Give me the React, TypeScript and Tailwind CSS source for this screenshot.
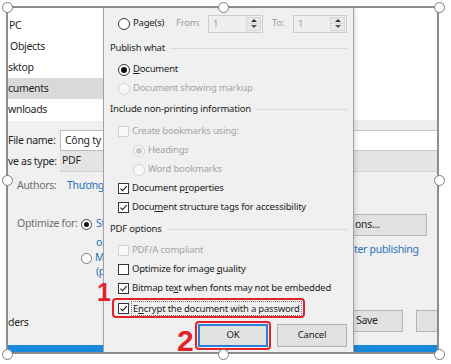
import React from 'react'

type BoxProps = { on?: boolean; disabled?: boolean }

function Radio({ on, disabled }: BoxProps) {
  return (
    <span
      className={`flex h-[12px] w-[12px] shrink-0 items-center justify-center rounded-full border ${
        disabled ? 'border-[#d2d2d2] bg-[#f8f8f8]' : 'border-[#3a3a3a] bg-white'
      }`}
    >
      {on && <span className={`h-[6px] w-[6px] rounded-full ${disabled ? 'bg-[#c8c8c8]' : 'bg-[#111]'}`} />}
    </span>
  )
}

function Check({ on, disabled }: BoxProps) {
  return (
    <span
      className={`flex h-[11px] w-[11px] shrink-0 items-center justify-center border ${
        disabled ? 'border-[#d2d2d2] bg-[#f8f8f8]' : 'border-[#333] bg-white'
      }`}
    >
      {on && (
        <svg width="9" height="9" viewBox="0 0 9 9">
          <path d="M1.4 4.6 L3.6 6.7 L7.7 2.1" fill="none" stroke="#222" strokeWidth="1.1" />
        </svg>
      )}
    </span>
  )
}

function Spin({ className }: { className: string }) {
  return (
    <div className={`flex h-[18px] items-stretch border border-[#cbcbcb] bg-[#efefef] ${className}`}>
      <span className="flex-1 pl-[4px] leading-[16px] text-[#9c9c9c]">1</span>
      <div className="m-[1px] flex w-[15px] flex-col border border-[#d6d6d6] bg-[#e9e9e9]">
        <div className="flex flex-1 items-center justify-center border-b border-[#d6d6d6]">
          <span className="h-0 w-0 border-x-[3px] border-b-[3px] border-x-transparent border-b-[#333]" />
        </div>
        <div className="flex flex-1 items-center justify-center">
          <span className="h-0 w-0 border-x-[3px] border-t-[3px] border-x-transparent border-t-[#555]" />
        </div>
      </div>
    </div>
  )
}

function Header({ text, className = '' }: { text: string; className?: string }) {
  return (
    <div className={`flex h-[19px] items-center pl-[6px] ${className}`}>
      <span className="whitespace-nowrap">{text}</span>
      <span className="ml-[5px] mr-[5px] h-px flex-1 bg-[#dadada]" />
    </div>
  )
}

function Option({
  kind,
  on,
  disabled,
  indent = false,
  children,
}: BoxProps & { kind: 'radio' | 'check'; indent?: boolean; children: React.ReactNode }) {
  return (
    <div className={`flex h-[19px] items-center gap-[3px] ${indent ? 'pl-[29px]' : 'pl-[14px]'}`}>
      {kind === 'radio' ? <Radio on={on} disabled={disabled} /> : <Check on={on} disabled={disabled} />}
      <span className={`whitespace-nowrap ${disabled ? 'text-[#a3a3a3]' : ''}`}>{children}</span>
    </div>
  )
}

const U = ({ c }: { c: string }) => <span className="underline underline-offset-[1px]">{c}</span>

function LeftPane() {
  const nav = [
    { t: 'PC', pl: 'pl-[1px]' },
    { t: 'Objects', pl: 'pl-[2px]' },
    { t: 'sktop', pl: 'pl-0' },
    { t: 'cuments', pl: 'pl-0', sel: true },
    { t: 'wnloads', pl: 'pl-0' },
  ]
  return (
    <div className="flex w-[95px] shrink-0 flex-col overflow-hidden text-[10.5px] tracking-[-0.3px] text-[#262626]">
      <div className="h-[113px] bg-white pt-[7px]">
        {nav.map((n) => (
          <div key={n.t} className={`flex h-[21px] items-center ${n.pl} ${n.sel ? 'bg-[#d9d9d9]' : ''}`}>
            {n.t}
          </div>
        ))}
      </div>
      <div className="flex flex-1 flex-col bg-[#f0f0f0] whitespace-nowrap">
        <div className="mt-[9px] flex h-[21px] items-center">
          <span className="w-[52px] shrink-0">File name:</span>
          <div className="flex h-full flex-1 items-center border border-r-0 border-[#bdbdbd] bg-white pl-[4px]">
            Công ty
          </div>
        </div>
        <div className="flex h-[21px] items-center">
          <span className="w-[52px] shrink-0">ve as type:</span>
          <div className="flex h-full flex-1 items-center border-b border-[#d0d0d0] bg-[#e4e4e4] pl-[2px]">PDF</div>
        </div>
        <div className="mt-[4px] flex h-[20px] items-center pl-[9px]">
          <span className="w-[50px] shrink-0 text-[#6e6e6e]">Authors:</span>
          <span className="text-[#2a70c2]">Thương</span>
        </div>
        <div className="mt-[21px] flex h-[14px] items-center pl-[9px]">
          <span className="w-[64px] shrink-0 text-[#6e6e6e]">Optimize for:</span>
          <span className="flex h-[11px] w-[11px] shrink-0 items-center justify-center rounded-full border border-[#444] bg-white">
            <span className="h-[5px] w-[5px] rounded-full bg-[#111]" />
          </span>
          <span className="ml-[4px] text-[#2a70c2]">St</span>
        </div>
        <div className="mt-[5px] flex h-[14px] items-center pl-[88px] text-[#2a70c2]">or</div>
        <div className="mt-[1px] flex h-[14px] items-center pl-[73px]">
          <span className="h-[11px] w-[11px] shrink-0 rounded-full border border-[#777] bg-white" />
          <span className="ml-[3px] text-[#2a70c2]">M</span>
        </div>
        <div className="flex h-[14px] items-center pl-[88px] text-[#2a70c2]">(p</div>
        <div className="mt-[37px] flex h-[14px] items-center">ders</div>
        <div className="mt-auto h-[7px] bg-[#1a88dc]" />
      </div>
    </div>
  )
}

function RightPane() {
  return (
    <div className="flex w-[83px] shrink-0 flex-col overflow-hidden text-[10.5px] tracking-[-0.3px] text-[#262626] whitespace-nowrap">
      <div className="h-[112px] bg-white" />
      <div className="flex flex-1 flex-col bg-[#f0f0f0]">
        <div className="h-[10px] bg-[#ededed]" />
        <div className="h-[21px] border-y border-[#c6c6c6] bg-white" />
        <div className="h-[21px] border-b border-[#d3d3d3] bg-[#e4e4e4]" />
        <div className="mt-[42px] flex h-[22px] w-[73px] items-center border border-l-0 border-[#b4b4b4] bg-[#e1e1e1] pl-[1px]">
          ons...
        </div>
        <div className="mt-[7px] flex h-[14px] items-center text-[#2a70c2]">ter publishing</div>
        <div className="mt-[53px] flex h-[22px] gap-[13px]">
          <div className="flex w-[49px] items-center border border-l-0 border-[#b4b4b4] bg-[#e1e1e1] pl-[2px]">
            Save
          </div>
          <div className="flex-1 border border-r-0 border-[#b4b4b4] bg-[#e1e1e1]" />
        </div>
        <div className="mt-auto h-[7px] bg-[#1a88dc]" />
      </div>
    </div>
  )
}

function Dialog() {
  return (
    <div className="relative z-10 flex w-[251px] shrink-0 flex-col border-x border-[#a2a2a2] bg-[#f0f0f0] pt-[6px] text-[9.5px] tracking-[-0.2px] text-[#1c1c1c] shadow-[2px_0_4px_rgba(0,0,0,0.12)]">
      <div className="flex h-[19px] items-center pl-[14px]">
        <Radio />
        <span className="ml-[3px] w-[43px]">Page(s)</span>
        <span className="w-[32px] text-[#9c9c9c]">From:</span>
        <Spin className="w-[55px]" />
        <span className="ml-[9px] w-[21px] text-[#9c9c9c]">To:</span>
        <Spin className="w-[54px]" />
      </div>

      <Header text="Publish what" className="mt-[6px]" />
      <div className="mt-[2px]">
        <Option kind="radio" on>
          <U c="D" />
          ocument
        </Option>
        <Option kind="radio" disabled>
          Document showing markup
        </Option>
      </div>

      <Header text="Include non-printing information" className="mt-[2px]" />
      <div className="mt-[3px]">
        <Option kind="check" disabled>
          Create bookmarks using:
        </Option>
        <Option kind="radio" on disabled indent>
          Headings
        </Option>
        <Option kind="radio" disabled indent>
          Word bookmarks
        </Option>
        <Option kind="check" on>
          Document p<U c="r" />
          operties
        </Option>
        <Option kind="check" on>
          Docu<U c="m" />
          ent structure tags for accessibility
        </Option>
      </div>

      <Header text="PDF options" className="mt-[3px]" />
      <div className="mt-[2px]">
        <Option kind="check" disabled>
          PDF/A compliant
        </Option>
        <Option kind="check">
          Optimize for image <U c="q" />
          uality
        </Option>
        <Option kind="check" on>
          Bitmap te<U c="x" />t when fonts may not be embedded
        </Option>
        <div className="flex h-[20px] items-center pl-[8px]">
          <div className="flex h-[20px] items-center rounded-[4px] border-2 border-[#e2232b] pl-[4px] pr-[1px]">
            <Check on />
            <span className="ml-[2px] border border-dotted border-[#7a7a7a] px-[1px] leading-[13px] whitespace-nowrap">
              E<U c="n" />
              crypt the document with a password
            </span>
          </div>
        </div>
      </div>

      <div className="mt-[3px] flex items-start pl-[91px]">
        <div className="rounded-[4px] border-2 border-[#e2232b] p-[1px]">
          <div className="flex h-[23px] w-[70px] items-center justify-center border-2 border-[#2b7fd4] bg-[#e1e1e1]">
            OK
          </div>
        </div>
        <div className="ml-[6px] mt-[3px] flex h-[23px] w-[70px] items-center justify-center border border-[#b0b0b0] bg-[#e1e1e1]">
          Cancel
        </div>
      </div>
    </div>
  )
}

export default function App() {
  const handles = [
    'left-[2px] top-[2px]',
    'left-[218px] top-[2px]',
    'left-[434px] top-[2px]',
    'left-[2px] top-[175px]',
    'left-[434px] top-[175px]',
    'left-[2px] top-[349px]',
    'left-[218px] top-[349px]',
    'left-[434px] top-[349px]',
  ]
  return (
    <div className="relative h-[364px] w-[451px] overflow-hidden bg-white font-['Noto_Sans',sans-serif]">
      <div className="ml-[6px] mt-[6px] flex h-[348px] w-[433px] overflow-hidden border-2 border-[#8d8d8d]">
        <LeftPane />
        <Dialog />
        <RightPane />
      </div>

      {handles.map((h) => (
        <span
          key={h}
          className={`absolute ${h} z-20 h-[11px] w-[11px] rounded-full border-[1.5px] border-[#7b7b7b] bg-white`}
        />
      ))}

      <span className="absolute left-[97px] top-[280px] z-20 font-['Liberation_Sans',sans-serif] text-[25px] leading-none font-bold text-[#e2232b]">
        1
      </span>
      <span className="absolute left-[177px] top-[326px] z-20 font-['Liberation_Sans',sans-serif] text-[30px] leading-none font-bold text-[#e2232b]">
        2
      </span>
    </div>
  )
}
